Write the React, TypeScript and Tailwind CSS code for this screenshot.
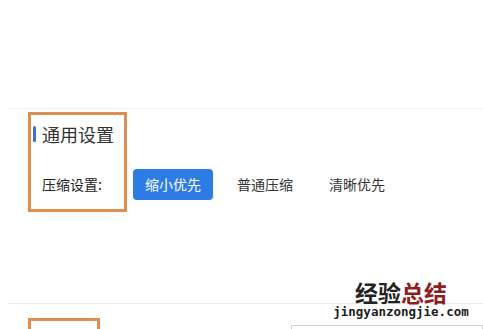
import React from 'react';

const cjk = '"Noto Sans CJK SC", "Microsoft YaHei", sans-serif';

const options = ['缩小优先', '普通压缩', '清晰优先'];

const Watermark: React.FC = () => (
  <div className="absolute left-[333px] top-[280px] flex w-[136px] flex-col items-center">
    <div
      className="h-[24px] text-[23px] font-bold leading-[24px]"
      style={{ fontFamily: cjk }}
    >
      <span className="text-[#222222]">经验</span>
      <span className="text-[#8e1f1f]">总结</span>
    </div>
    <div
      className="mt-[1px] text-[12.5px] font-bold leading-[14px] text-[#1e1e1e]"
      style={{ fontFamily: '"DejaVu Sans Mono", monospace' }}
    >
      jingyanzongjie.com
    </div>
  </div>
);

export default function App() {
  const [mode, setMode] = React.useState(0);

  return (
    <div className="relative h-[329px] w-[483px] overflow-hidden bg-white" style={{ fontFamily: cjk }}>
      <div className="h-[108px]" />

      {/* general settings */}
      <section className="relative ml-2 h-[195px] border-t border-[#ececec] pl-[25px] pt-[13px]">
        <div className="pointer-events-none absolute left-[20px] top-[3px] h-[100px] w-[99px] border-[3px] border-[#dd8e52]" />
        <div className="flex items-center gap-[6px]">
          <span className="h-[16px] w-[3px] rounded-sm bg-[#3d6fd4]" />
          <h2 className="text-[18px] leading-[24px] text-[#333333]">通用设置</h2>
        </div>
        <div className="mt-[23px] flex items-center pl-[9px]">
          <span className="w-[91px] text-[14px] text-[#222222]">压缩设置:</span>
          <div className="flex gap-3">
            {options.map((o, i) => (
              <button
                key={o}
                onClick={() => setMode(i)}
                className={
                  i === mode
                    ? 'h-[31px] w-[80px] rounded-[4px] bg-[#2f7be6] text-[14px] text-white'
                    : 'h-[31px] w-[80px] rounded-[4px] text-[14px] text-[#333333]'
                }
              >
                {o}
              </button>
            ))}
          </div>
        </div>
      </section>

      {/* next section, cut off */}
      <section className="relative ml-2 h-[40px] border-t border-[#ececec] pl-[25px] pt-[21px]">
        <div className="pointer-events-none absolute left-[20px] top-[14px] h-[30px] w-[72px] border-[3px] border-[#dd8e52]" />
        <div className="flex">
          <div className="w-[258px]" />
          <div className="h-[30px] flex-1 border border-[#cfcfcf]" />
        </div>
      </section>

      <Watermark />
    </div>
  );
}
